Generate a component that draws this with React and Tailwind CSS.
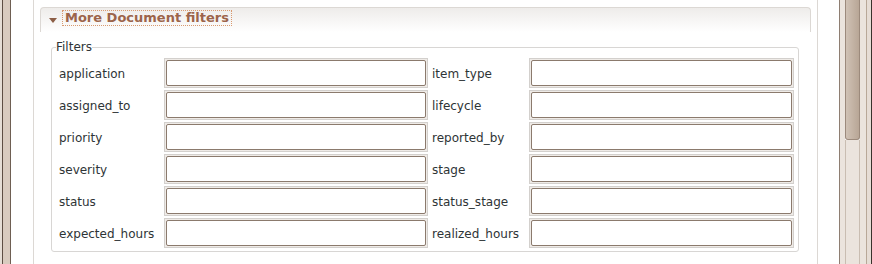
import React from 'react';

const rows = [
  ['application', 'item_type'],
  ['assigned_to', 'lifecycle'],
  ['priority', 'reported_by'],
  ['severity', 'stage'],
  ['status', 'status_stage'],
  ['expected_hours', 'realized_hours'],
];

const Field = ({ width }) => (
  <div className={`${width} h-[30px] border border-[#d3d0cd] bg-[#efebe7] p-[1px]`}>
    <input
      type="text"
      className="block w-full h-full rounded-[2px] border border-[#8b7a6d] bg-white outline-none"
    />
  </div>
);

const ScrollBar = () => (
  <div className="flex w-[33px] h-full shrink-0">
    <div className="w-[1px] bg-[#8e7e72]" />
    <div className="w-[5px] bg-[#ebe4dd]" />
    <div className="flex flex-col w-[15px]">
      <div className="h-[140px] rounded-b-[3px] border-x border-b border-[#9c8a7c] bg-gradient-to-r from-[#d0c2b5] to-[#b8a696]" />
      <div className="flex-1 border-x border-[#c9bdb1] bg-[#ebe4dd]" />
    </div>
    <div className="w-[6px] bg-[#ebe4dd]" />
    <div className="w-[1px] bg-[#b8a898]" />
    <div className="w-[4px] bg-[#e6ddd5]" />
    <div className="w-[1px] bg-[#3a322c]" />
  </div>
);

export default function App() {
  return (
    <div className="flex w-[872px] h-[264px] overflow-hidden bg-white font-['DejaVu_Sans',sans-serif] text-[12px] text-[#2e3436]">
      {/* window edge */}
      <div className="flex shrink-0">
        <div className="w-[2px] bg-[#e6ded6]" />
        <div className="w-[1px] bg-[#5e4e44]" />
        <div className="w-[7px] bg-[#d9cbbf]" />
        <div className="w-[1px] bg-[#6e5e52]" />
      </div>

      <div className="w-[22px] shrink-0" />
      <div className="w-[1px] shrink-0 bg-[#dcd8d4]" />

      <div className="w-[783px] shrink-0">
        {/* expander header */}
        <div className="mx-[6px] mt-[7px] h-[25px] rounded-t-[4px] border border-b-0 border-[#dcd8d4] bg-gradient-to-b from-[#eeecea] to-white flex items-start pt-[2px] pl-[8px]">
          <svg width="8" height="5" viewBox="0 0 8 5" className="mt-[8px] mr-[5px]">
            <polygon points="0,0 8,0 4,5" fill="#8c5e46" />
          </svg>
          <span className="border border-dotted border-[#d99a70] px-[2px] h-[16px] leading-[14px] text-[13px] font-bold text-[#9c644a]">
            More Document filters
          </span>
        </div>

        {/* filters group */}
        <fieldset className="ml-[17px] mr-[18px] mt-[8px] rounded-[3px] border border-[#d8d6d4] p-0">
          <legend className="ml-[4px] leading-[14px] text-[#2e3436]">Filters</legend>
          <div className="flex flex-col gap-[2px] pl-[7px] pr-[4px] pt-[4px] pb-[3px]">
            {rows.map(([a, b]) => (
              <div key={a} className="flex items-center">
                <span className="w-[105px] shrink-0 pt-[2px]">{a}</span>
                <Field width="w-[264px]" />
                <span className="w-[97px] shrink-0 ml-[4px] pt-[2px]">{b}</span>
                <Field width="w-[265px]" />
              </div>
            ))}
          </div>
        </fieldset>
      </div>

      <div className="w-[1px] shrink-0 bg-[#dcd8d4]" />
      <div className="w-[21px] shrink-0" />
      <ScrollBar />
    </div>
  );
}
